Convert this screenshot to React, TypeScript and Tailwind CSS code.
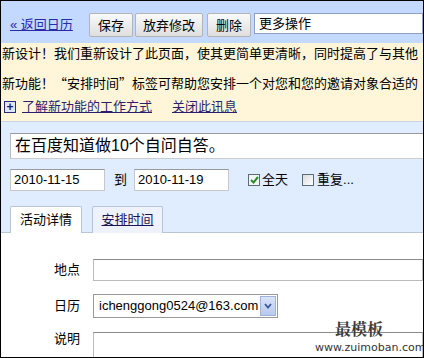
import React from "react";

const font = "font-['Liberation_Sans','Noto_Sans_CJK_SC',sans-serif]";

function Button({ label, className }: { label: string; className: string }) {
  return (
    <button
      type="button"
      className={`h-[24px] rounded-[2px] border border-[#b4b4b4] bg-gradient-to-b from-[#fafafa] to-[#dedede] text-[13px] text-black leading-none ${className}`}
    >
      {label}
    </button>
  );
}

export default function App() {
  return (
    <div className={`relative w-[424px] h-[358px] overflow-hidden border border-black bg-white text-black ${font}`}>
      {/* toolbar */}
      <div className="flex items-start h-[42px] bg-[#c3d9ff] pt-[12px] pl-[9px]">
        <a href="#" className="mt-[1px] w-[79px] text-[13px] leading-[22px] text-[#2a2aaa] underline">
          « 返回日历
        </a>
        <Button label="保存" className="w-[44px]" />
        <Button label="放弃修改" className="w-[68px] ml-[2px]" />
        <Button label="删除" className="w-[44px] ml-[4px]" />
        <div className="ml-[3px] flex-1 h-[21px] border border-[#8ea0c0] bg-white text-[13px] leading-[19px] pl-[4px]">
          更多操作
        </div>
      </div>

      {/* notice */}
      <div className="h-[78px] bg-[#fff6d9] text-[13px] whitespace-nowrap pl-[1px]">
        <div className="h-[20px] leading-[20px] pt-[1px]">新设计！我们重新设计了此页面，使其更简单更清晰，同时提高了与其他</div>
        <div className="mt-[10px] h-[20px] leading-[20px] font-['Noto_Sans_CJK_SC',sans-serif]">新功能！“安排时间”标签可帮助您安排一个对您和您的邀请对象合适的</div>
        <div className="mt-[4px] h-[20px] flex items-center">
          <span className="ml-[2px] mr-[6px] w-[12px] h-[12px] border border-[#2a2a7a] bg-[#dfe6f7] flex items-center justify-center text-[#1a1a6a] text-[12px] font-bold leading-none">
            +
          </span>
          <a href="#" className="text-[#2b1f6e] underline leading-[20px]">了解新功能的工作方式</a>
          <a href="#" className="ml-[20px] text-[#2b1f6e] underline leading-[20px]">关闭此讯息</a>
        </div>
      </div>

      {/* event panel */}
      <div className="bg-[#e0ecff] border-t border-[#c9d4e6] pt-[11px] pl-[9px]">
        <div className="h-[26px] bg-white border-t border-[#999] border-l border-l-[#bbb] border-b border-b-[#ccc] text-[16px] leading-[24px] pl-[4px] whitespace-nowrap">
          在百度知道做10个自问自答。
        </div>
        <div className="flex items-center h-[40px] mt-[1px] text-[13px]">
          <div className="w-[95px] h-[22px] bg-white border border-[#c8c8c8] border-t-[#9a9a9a] pl-[3px] leading-[20px]">2010-11-15</div>
          <span className="ml-[9px] w-[20px]">到</span>
          <div className="w-[95px] h-[22px] bg-white border border-[#c8c8c8] border-t-[#9a9a9a] pl-[3px] leading-[20px]">2010-11-19</div>
          <span className="ml-[19px] w-[12px] h-[12px] border border-[#5a6b7a] bg-[#f2f6f2] flex items-center justify-center">
            <svg width="9" height="8" viewBox="0 0 9 8">
              <path d="M1 4 L3.5 6.5 L8 1" stroke="#2f8a2f" strokeWidth="2" fill="none" />
            </svg>
          </span>
          <span className="ml-[2px]">全天</span>
          <span className="ml-[14px] w-[12px] h-[12px] border border-[#5a6b7a] bg-gradient-to-br from-[#dcdcdc] to-[#ffffff]"></span>
          <span className="ml-[3px]">重复...</span>
        </div>
        <div className="flex items-end h-[33px] text-[13px]">
          <div className="w-[72px] h-[27px] bg-white border border-b-0 border-[#b8c4d8] rounded-t-[2px] flex items-center justify-center">
            活动详情
          </div>
          <div className="ml-[10px] w-[71px] h-[27px] bg-[#edf2fc] border border-b-0 border-[#b8c4d8] rounded-t-[2px] flex items-center justify-center">
            <a href="#" className="text-[#20124d] underline">安排时间</a>
          </div>
        </div>
      </div>

      {/* details */}
      <div className="border-t border-[#b8c4d8] -mt-[1px] pt-[25px] text-[13px]">
        <div className="flex items-center h-[23px]">
          <span className="w-[80px] text-right pr-[1px]">地点</span>
          <div className="ml-[12px] flex-1 h-[22px] border border-[#bbb] border-t-[#8a8a8a]"></div>
        </div>
        <div className="flex items-center h-[24px] mt-[13px]">
          <span className="w-[80px] text-right pr-[1px]">日历</span>
          <div className="ml-[12px] w-[185px] h-[24px] border border-[#999] flex items-center pl-[5px]">
            <span className="flex-1 text-[13px] whitespace-nowrap">ichenggong0524@163.com</span>
            <span className="w-[16px] h-[20px] mr-[1px] bg-gradient-to-b from-[#d9e3f7] to-[#b8c9ee] border border-[#9fb2d8] flex items-center justify-center">
              <svg width="8" height="6" viewBox="0 0 8 6">
                <path d="M1 1 L4 4.5 L7 1" stroke="#3a5aa0" strokeWidth="1.8" fill="none" />
              </svg>
            </span>
          </div>
        </div>
        <div className="flex items-start h-[40px] mt-[14px]">
          <span className="w-[80px] text-right pr-[1px] leading-[14px]">说明</span>
          <div className="ml-[12px] flex-1 h-[40px] border border-[#bbb] border-t-[#8a8a8a]"></div>
        </div>
      </div>

      {/* watermark */}
      <div className="absolute left-[314px] top-[318px] flex flex-col items-start pointer-events-none">
        <span className="ml-[20px] text-[16px] font-bold text-[#3a3a3a] font-['Noto_Serif_CJK_SC','Noto_Sans_CJK_SC',serif] leading-[20px]">最模板</span>
        <span className="text-[11px] text-[#333] font-['DejaVu_Sans',sans-serif] leading-[14px] mt-[2px]">www.zuimoban.com</span>
      </div>
    </div>
  );
}
